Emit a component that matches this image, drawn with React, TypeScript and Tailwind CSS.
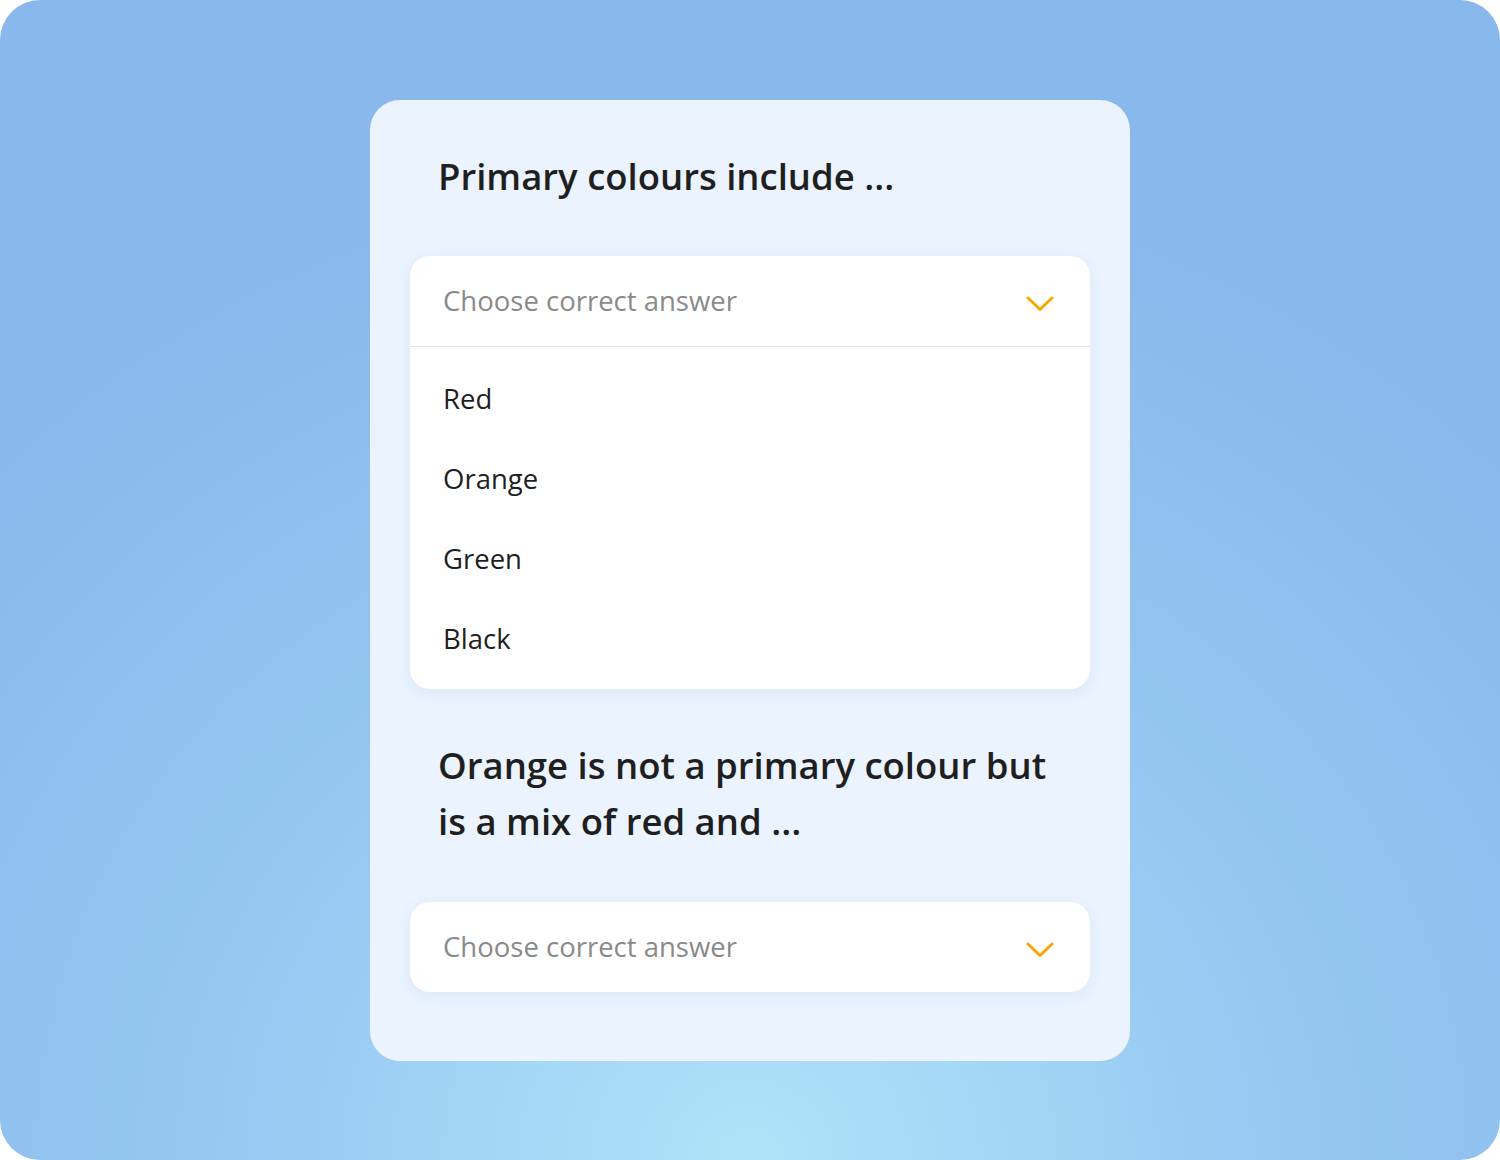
const OPTIONS = ["Red", "Orange", "Green", "Black"];

const font = { fontFamily: "'Open Sans', Lato, sans-serif" };

function Chevron() {
  return (
    <svg width="28" height="18" viewBox="0 0 28 18" fill="none" className="mt-[6px] shrink-0">
      <polyline
        points="2,3 14,14.5 26,3"
        stroke="#f5a700"
        strokeWidth="3"
        strokeLinecap="round"
        strokeLinejoin="round"
      />
    </svg>
  );
}

function Select({ open, options = [] }: { open?: boolean; options?: string[] }) {
  return (
    <div className="rounded-[20px] bg-white shadow-[0_4px_14px_rgba(120,150,200,0.12)]">
      <div className="flex h-[90px] items-center justify-between pl-[33px] pr-[36px]">
        <span className="text-[27.5px] text-[#8a8a8a]">Choose correct answer</span>
        <Chevron />
      </div>
      {open && (
        <div className="border-t border-[#e6e6e6] pt-[12px] pb-[10px]">
          {options.map((o) => (
            <div key={o} className="flex h-20 items-center px-[33px] text-[27.5px] text-[#1f1f1f]">
              {o}
            </div>
          ))}
        </div>
      )}
    </div>
  );
}

export default function App() {
  return (
    <div className="h-[1160px] w-[1500px] bg-white" style={font}>
      <div className="flex h-full w-full items-start justify-center rounded-[40px] bg-[radial-gradient(ellipse_70%_85%_at_50%_100%,#b0e2f9_0%,#96c8f2_50%,#89b8ec_100%)] pt-[100px]">
        <div className="flex w-[760px] flex-col rounded-[30px] bg-[#eaf3fe] px-10 pt-[48px] pb-[69px]">
          <h2 className="px-[28px] text-[36.5px] leading-[56px] font-semibold text-[#1f1f1f]">
            Primary colours include ...
          </h2>
          <div className="mt-[52px]">
            <Select open options={OPTIONS} />
          </div>
          <h2 className="mt-[48px] px-[28px] text-[36.5px] leading-[56px] font-semibold text-[#1f1f1f]">
            Orange is not a primary colour but is a mix of red and ...
          </h2>
          <div className="mt-[53px]">
            <Select />
          </div>
        </div>
      </div>
    </div>
  );
}
